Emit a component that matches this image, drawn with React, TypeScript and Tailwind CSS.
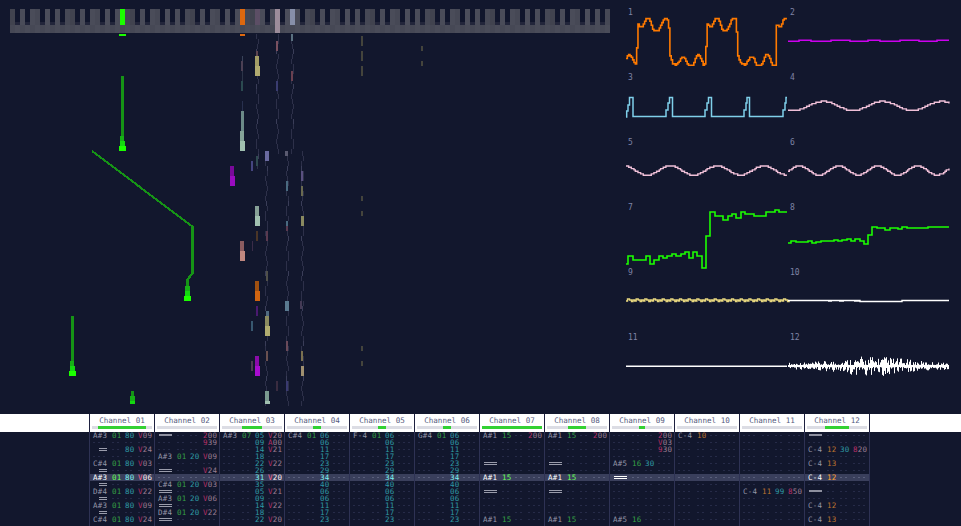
import React from 'react';

type Pt = [number, number];
type Rect = [number, number, number, number, string];

const MONO = "font-['DejaVu_Sans_Mono',monospace]";

// ---- piano ----
const BLACK = [1, 3, 6, 8, 10];
const ACTIVE_KEYS: Record<number, { color: string; full?: boolean }> = {
  22: { color: '#1cff00' },
  46: { color: '#de680f' },
  49: { color: '#5c4e65' },
  53: { color: '#9c8c9a', full: true },
  56: { color: '#878fa9' },
};
const WHITE_TOP = ['#41434f', '#4a4c59', '#4a4c59', '#464855', '#4c4e5b', '#4a4c59', '#464855'];

const Piano = () => (
  <div className="ml-[10px] flex w-[600px]">
    {Array.from({ length: 120 }).map((_, i) => {
      const pc = i % 12;
      const isBlack = BLACK.includes(pc);
      const active = ACTIVE_KEYS[i];
      const whiteIdx = [0, 2, 4, 5, 7, 9, 11].indexOf(pc);
      return (
        <div key={i} className="w-[5px]">
          {isBlack ? (
            <div className="h-4 bg-[#11162c]" style={active ? { background: active.color } : undefined}>
              {!active && <div className="h-[13px]" />}
              {!active && <div className="h-[3px] bg-[#22253a]" />}
            </div>
          ) : (
            <div className="h-4" style={{ background: active ? active.color : WHITE_TOP[whiteIdx] }} />
          )}
          <div className="h-2" style={{ background: active?.full ? active.color : i % 2 ? '#4a4c59' : '#464855' }} />
        </div>
      );
    })}
  </div>
);

// ---- falling notes ----
const NOTES: Rect[] = [
  [119, 34, 7, 2, '#1cff00'],
  [240, 34, 5, 2, '#de680f'],
  // channel 1
  [121, 76, 3, 60, '#169416'],
  [120, 136, 4, 5, '#16b016'],
  [120, 141, 5, 5, '#14d810'],
  [119, 146, 7, 5, '#1cff00'],
  // glide
  [191, 226, 3, 48, '#169416'],
  [186, 279, 3, 7, '#169416'],
  [185, 286, 5, 5, '#16b016'],
  [185, 291, 5, 5, '#14d810'],
  [184, 296, 7, 5, '#1cff00'],
  [71, 316, 3, 45, '#169416'],
  [70, 361, 4, 5, '#16b016'],
  [70, 366, 5, 5, '#14d810'],
  [69, 371, 7, 5, '#1cff00'],
  [131, 391, 3, 5, '#169416'],
  [130, 396, 5, 5, '#16b016'],
  [130, 401, 5, 3, '#14d810'],
  // upper mid
  [242, 56, 1, 5, '#39435a'],
  [241, 61, 2, 10, '#4c4054'],
  [242, 71, 1, 10, '#2b3448'],
  [241, 81, 2, 10, '#2b4a50'],
  [256, 51, 2, 5, '#5c4450'],
  [255, 56, 4, 10, '#a29c66'],
  [255, 66, 5, 10, '#b0aa70'],
  [242, 101, 1, 10, '#28304e'],
  [241, 111, 3, 20, '#6c8a88'],
  [240, 131, 4, 10, '#85a398'],
  [240, 141, 5, 10, '#a0c0b0'],
  [230, 166, 4, 10, '#7a0a9a'],
  [230, 176, 5, 10, '#9a0cc0'],
  [251, 161, 2, 10, '#454580'],
  [256, 156, 2, 10, '#2f4a50'],
  [265, 151, 4, 10, '#6a6aa0'],
  [285, 151, 3, 5, '#5a5a70'],
  [276, 41, 2, 10, '#7a5060'],
  [291, 34, 2, 7, '#5a7080'],
  [291, 71, 2, 10, '#6a4050'],
  [276, 81, 2, 10, '#3a3c70'],
  [286, 181, 2, 10, '#4a6a80'],
  [301, 171, 2, 10, '#5a5080'],
  [301, 186, 2, 10, '#6a6a50'],
  // lower mid
  [255, 206, 4, 10, '#86a096'],
  [255, 216, 5, 10, '#a0c0b0'],
  [256, 231, 2, 10, '#4a3527'],
  [240, 241, 4, 10, '#8a5c60'],
  [240, 251, 5, 10, '#c08880'],
  [252, 241, 1, 10, '#3a2c48'],
  [255, 281, 4, 10, '#a05010'],
  [255, 291, 5, 10, '#d06410'],
  [256, 306, 2, 10, '#4a1a70'],
  [251, 321, 2, 10, '#385870'],
  [266, 311, 3, 5, '#506a80'],
  [265, 316, 4, 10, '#8a8a60'],
  [265, 326, 5, 10, '#b0ac70'],
  [285, 301, 4, 10, '#5a7a90'],
  [300, 301, 2, 8, '#443a55'],
  [255, 356, 4, 10, '#8a0ca8'],
  [255, 366, 5, 10, '#a80cd0'],
  [251, 361, 2, 10, '#4a3a50'],
  [301, 366, 3, 10, '#a09070'],
  [286, 381, 2, 10, '#3a3a70'],
  [276, 381, 2, 10, '#3a2c40'],
  [265, 391, 4, 10, '#7a9a90'],
  [265, 401, 5, 3, '#a0c0b0'],
  [301, 216, 3, 10, '#8a8a60'],
  [286, 221, 2, 5, '#4a6a80'],
  [286, 226, 2, 5, '#5a3a50'],
  [266, 231, 2, 10, '#5a3a50'],
  [266, 271, 2, 10, '#50504a'],
  [301, 351, 2, 10, '#7a7050'],
  [266, 351, 2, 10, '#6a5050'],
  [286, 341, 2, 10, '#6a4a5a'],
  // far right ticks
  [361, 36, 2, 10, '#44443c'],
  [361, 51, 2, 10, '#44443c'],
  [361, 66, 2, 10, '#44443c'],
  [361, 196, 2, 5, '#44443c'],
  [361, 211, 2, 5, '#44443c'],
  [361, 346, 2, 5, '#44443c'],
  [361, 361, 2, 5, '#44443c'],
  [421, 46, 2, 5, '#44443c'],
  [421, 61, 2, 5, '#44443c'],
];

// thin wobbling trails behind the higher notes
const TRAILS: Array<[number, number, number]> = [
  [257, 34, 166],
  [277, 34, 151],
  [292, 34, 151],
  [266, 151, 404],
  [287, 151, 404],
  [302, 151, 404],
];

const Trail = ({ x, from, to }: { x: number; from: number; to: number }) => {
  const segs: Rect[] = [];
  for (let y = from, n = 0; y < to; y += 5, n++) {
    const off = Math.round(Math.sin(n * 1.7 + x) * 1.2);
    segs.push([x + off, y, 1, 5, n % 7 === 3 ? '#3a3d58' : '#2d3049']);
  }
  return (
    <>
      {segs.map(([sx, sy, w, h, c]) => (
        <rect key={sy} x={sx} y={sy} width={w} height={h} fill={c} />
      ))}
    </>
  );
};

const NoteCanvas = () => (
  <svg className="absolute inset-0" width={620} height={414} shapeRendering="crispEdges">
    {TRAILS.map(([x, a, b]) => (
      <Trail key={x} x={x} from={a} to={b} />
    ))}
    {NOTES.map(([x, y, w, h, c], i) => (
      <rect key={i} x={x} y={y} width={w} height={h} fill={c} />
    ))}
    <path d="M92 151 L193 227" stroke="#169416" strokeWidth={2} fill="none" />
    <path d="M192 274 L187 280" stroke="#169416" strokeWidth={2.4} fill="none" />
  </svg>
);

// ---- scopes ----
// samples a polyline on a small grid so that it looks like a low-res canvas
const pixelPath = (pts: Pt[], step = 1.33) => {
  let d = '';
  let seg = 0;
  for (let x = pts[0][0]; x <= pts[pts.length - 1][0]; x += step) {
    while (seg < pts.length - 2 && x > pts[seg + 1][0]) seg++;
    const [x0, y0] = pts[seg];
    const [x1, y1] = pts[seg + 1];
    const y = x1 === x0 ? y1 : y0 + ((y1 - y0) * (x - x0)) / (x1 - x0);
    const ry = (Math.round(y / step) * step).toFixed(2);
    d += d ? ` H${x.toFixed(2)} V${ry}` : `M${x.toFixed(2)} ${ry}`;
  }
  return d;
};

// step list: at x, jump to y
const stepPath = (pts: Pt[]) => pts.map(([x, y], i) => (i === 0 ? `M${x} ${y}` : `H${x} V${y}`)).join(' ');

const sine = (cy: number, amp: number, peak: number, period: number) => {
  const pts: Pt[] = [];
  for (let x = 0; x <= 161; x += 1) {
    pts.push([x, cy - amp * Math.cos(((x - peak) * 2 * Math.PI) / period)]);
  }
  return pixelPath(pts);
};

const W1: Pt[] = [
  [0, 51], [2, 46], [5, 49], [9, 57], [10, 55], [11, 31], [12, 16], [13, 19], [16, 19], [20, 10], [23, 10], [27, 22], [32, 22], [38, 10], [41, 10], [43, 22], [43, 45], [46, 55], [50, 57], [56, 49], [58, 49], [62, 57], [67, 57], [71, 46], [74, 49], [77, 57], [79, 55], [80, 35], [81, 16], [85, 19], [89, 10], [92, 10], [96, 22], [101, 22], [106, 10], [110, 10], [111, 45], [114, 55], [119, 57], [124, 49], [127, 49], [130, 57], [135, 57], [140, 46], [143, 49], [146, 57], [149, 57], [149.5, 17], [154, 19], [158, 10], [161, 10],
];

const W2: Pt[] = [
  [0, 33.3], [11, 32.3], [23, 33.3], [43, 32.3], [62, 33.3], [80, 32.3], [92, 33.3], [112, 32.3], [131, 33.3], [149, 32.3], [161, 32.3],
];

const W3: Pt[] = [
  [0, 44], [0.7, 38], [2, 32], [3.5, 24.5], [7, 24.5], [7, 43.5], [39, 43.5], [40, 37], [42, 30], [43.5, 24.5], [46.5, 24.5], [46.5, 43.5], [78, 43.5], [79, 37], [81, 30], [82.5, 24.5], [85.5, 24.5], [85.5, 43.5], [117, 43.5], [118, 37], [120, 30], [121, 24.5], [123.5, 24.5], [123.5, 43.5], [156, 43.5], [157, 37], [159, 30], [160, 24.5], [161, 24.5],
];

const W7: Pt[] = [
  [0, 61], [2, 53], [7, 57], [20, 53], [24, 61], [28, 57], [33, 53], [37, 55], [41, 53], [46, 51], [50, 53], [55, 51], [59, 49], [63, 55], [67, 49], [71, 53], [76, 65], [80, 33], [84, 9], [89, 13], [97, 17], [102, 13], [106, 11], [110, 15], [115, 9], [119, 11], [128, 13], [140, 9], [149, 7], [153, 9], [161, 9],
];
const W8: Pt[] = [
  [0, 40], [3, 38], [8, 39], [20, 38], [24, 40], [28, 39], [33, 38], [46, 37], [50, 38], [54, 37], [59, 36], [63, 38], [67, 36], [72, 38], [76, 41], [80, 32], [84, 24], [89, 25], [97, 27], [102, 25], [110, 26], [114, 24], [119, 25], [140, 24], [161, 24],
];

const saw = () => {
  const pts: Pt[] = [];
  for (let x = 0; x < 159; x += 8.67) {
    pts.push([x, 33], [x + 1.5, 31], [x + 3.5, 32], [x + 5.5, 33.5], [x + 7, 32]);
  }
  return stepPath(pts);
};

const noise = () => {
  let d = '';
  for (let i = 0; i < 161; i++) {
    const r1 = Math.abs(Math.sin(i * 12.9898) * 43758.5453) % 1;
    const r2 = Math.abs(Math.sin(i * 78.233) * 24634.6345) % 1;
    const env = 2.5 + 7 * Math.exp(-Math.pow((i - 85) / 40, 2));
    d += ` M${i + 0.5} ${(33 - 1 - r1 * r1 * env).toFixed(1)} V${(33 + 1 + r2 * r2 * env).toFixed(1)}`;
  }
  return d;
};

const SCOPES: Array<{ d: string; color: string; width?: number }> = [
  { d: pixelPath(W1), color: '#ff7a00', width: 1.6 },
  { d: stepPath(W2), color: '#cc00ee', width: 1.5 },
  { d: stepPath(W3), color: '#7fd0ea', width: 1.5 },
  { d: sine(33, 4.6, 35, 59), color: '#f0c0d8' },
  { d: sine(32.5, 4.6, 44, 46.7), color: '#f0c0d8' },
  { d: sine(32.5, 4.6, 11, 39.3), color: '#f0c0d8' },
  { d: stepPath(W7), color: '#1cff00', width: 1.6 },
  { d: stepPath(W8), color: '#1cff00', width: 1.6 },
  { d: saw(), color: '#e8d880' },
  { d: 'M0 32.5 H72 V33.5 H114 V32.5 H161 M40 33 H44 M51 33 H56 M66 33 H72', color: '#ffffff' },
  { d: 'M0 33.3 H161', color: '#ffffff' },
  { d: noise(), color: '#ffffff', width: 1 },
];

const Scopes = () => (
  <div className="grid grid-cols-[162px_162px] auto-rows-[65px] pl-[6px] pt-2">
    {SCOPES.map((s, i) => (
      <div key={i} className="relative">
        <svg className="absolute inset-0 overflow-visible" width={161} height={65}>
          <path d={s.d} stroke={s.color} strokeWidth={s.width ?? 1.4} fill="none" />
        </svg>
        <span className="absolute left-[2px] top-[1px] text-[8px] leading-[8px] text-[#7f84a6]">{i + 1}</span>
      </div>
    ))}
  </div>
);

// ---- tracker ----
const OFF = '__off';
const REL = '__rel';
type Cell = { note?: string; inst?: string; vol?: string; fx?: string };
type Column = { name: string; fill: number; fillLeft: number; shortRel?: boolean; warm?: boolean; rows: Record<number, Cell> };

const ARP: Record<number, Cell> = {
  1: { vol: '06' }, 2: { vol: '11' }, 3: { vol: '17' }, 4: { vol: '23' }, 5: { vol: '29' }, 6: { vol: '34' },
  7: { vol: '40' }, 8: { vol: '06' }, 9: { vol: '06' }, 10: { vol: '11' }, 11: { vol: '17' }, 12: { vol: '23' },
};

const COLUMNS: Column[] = [
  {
    name: 'Channel 01', fill: 48, fillLeft: 6, shortRel: true,
    rows: {
      0: { note: 'A#3', inst: '01', vol: '80', fx: 'V09' },
      2: { note: REL, vol: '80', fx: 'V24' },
      4: { note: 'C#4', inst: '01', vol: '80', fx: 'V03' },
      5: { note: REL },
      6: { note: 'A#3', inst: '01', vol: '80', fx: 'V06' },
      7: { note: REL },
      8: { note: 'D#4', inst: '01', vol: '80', fx: 'V22' },
      9: { note: REL },
      10: { note: 'A#3', inst: '01', vol: '80', fx: 'V09' },
      11: { note: REL },
      12: { note: 'C#4', inst: '01', vol: '80', fx: 'V24' },
    },
  },
  {
    name: 'Channel 02', fill: 0, fillLeft: 0,
    rows: {
      0: { note: OFF, fx: '200' },
      1: { fx: '939' },
      3: { note: 'A#3', inst: '01', vol: '20', fx: 'V09' },
      5: { note: REL, fx: 'V24' },
      7: { note: 'C#4', inst: '01', vol: '20', fx: 'V03' },
      8: { note: REL },
      9: { note: 'A#3', inst: '01', vol: '20', fx: 'V06' },
      10: { note: REL },
      11: { note: 'D#4', inst: '01', vol: '20', fx: 'V22' },
      12: { note: REL },
    },
  },
  {
    name: 'Channel 03', fill: 20, fillLeft: 20,
    rows: {
      0: { note: 'A#3', inst: '07', vol: '05', fx: 'V20' },
      1: { vol: '09', fx: 'A00' },
      2: { vol: '14', fx: 'V21' },
      3: { vol: '18' },
      4: { vol: '22', fx: 'V22' },
      5: { vol: '26' },
      6: { vol: '31', fx: 'V20' },
      7: { vol: '35' },
      8: { vol: '05', fx: 'V21' },
      9: { vol: '09' },
      10: { vol: '14', fx: 'V22' },
      11: { vol: '18' },
      12: { vol: '22', fx: 'V20' },
    },
  },
  { name: 'Channel 04', fill: 8, fillLeft: 26, rows: { ...ARP, 0: { note: 'C#4', inst: '01', vol: '06' } } },
  { name: 'Channel 05', fill: 8, fillLeft: 26, rows: { ...ARP, 0: { note: 'F-4', inst: '01', vol: '06' } } },
  { name: 'Channel 06', fill: 8, fillLeft: 26, rows: { ...ARP, 0: { note: 'G#4', inst: '01', vol: '06' } } },
  {
    name: 'Channel 07', fill: 60, fillLeft: 0,
    rows: {
      0: { note: 'A#1', inst: '15', fx: '200' },
      4: { note: REL },
      6: { note: 'A#1', inst: '15' },
      8: { note: REL },
      12: { note: 'A#1', inst: '15' },
    },
  },
  {
    name: 'Channel 08', fill: 18, fillLeft: 21,
    rows: {
      0: { note: 'A#1', inst: '15', fx: '200' },
      4: { note: REL },
      6: { note: 'A#1', inst: '15' },
      8: { note: REL },
      12: { note: 'A#1', inst: '15' },
    },
  },
  {
    name: 'Channel 09', fill: 6, fillLeft: 27,
    rows: {
      0: { fx: '200' },
      1: { fx: 'V03' },
      2: { fx: '930' },
      4: { note: 'A#5', inst: '16', vol: '30' },
      6: { note: REL },
      12: { note: 'A#5', inst: '16' },
    },
  },
  { name: 'Channel 10', fill: 0, fillLeft: 0, warm: true, rows: { 0: { note: 'C-4', inst: '10' } } },
  { name: 'Channel 11', fill: 0, fillLeft: 0, warm: true, rows: { 8: { note: 'C-4', inst: '11', vol: '99', fx: '850' } } },
  {
    name: 'Channel 12', fill: 24, fillLeft: 18, warm: true,
    rows: {
      0: { note: OFF },
      2: { note: 'C-4', inst: '12', vol: '30', fx: '820' },
      4: { note: 'C-4', inst: '13' },
      6: { note: 'C-4', inst: '12' },
      8: { note: OFF },
      10: { note: 'C-4', inst: '12' },
      12: { note: 'C-4', inst: '13' },
    },
  },
];

// empty field: faint dots, not text
const Dots = ({ n, hot }: { n: number; hot: boolean }) => (
  <div className="flex gap-[3px] pt-[3px]">
    {Array.from({ length: n }).map((_, i) => (
      <div key={i} className={`h-px w-[2px] ${hot ? 'bg-[#5a5f7c]' : 'bg-[#262b48]'}`} />
    ))}
  </div>
);

const TrackCell = ({ cell, hot, col }: { cell?: Cell; hot: boolean; col: Column }) => {
  const note = cell?.note;
  return (
    <div className="grid h-[7px] grid-cols-[19px_13px_13px_15px] pl-[3px] text-[7.5px] leading-[7px] tracking-[0.2px]">
      {note === REL ? (
        <div className={col.shortRel ? 'ml-[6px] w-2 pt-[2px]' : 'ml-[1px] w-[13px] pt-[2px]'}>
          <div className={`h-px ${hot ? 'bg-white' : 'bg-[#9a9cab]'}`} />
          <div className={`mt-px h-px ${hot ? 'bg-white' : 'bg-[#9a9cab]'}`} />
        </div>
      ) : note === OFF ? (
        <div className="ml-[1px] w-[13px] pt-[2px]">
          <div className="h-[2px] bg-[#8d8f9e]" />
        </div>
      ) : note ? (
        <span className={hot ? 'text-white' : 'text-[#9496a8]'}>{note}</span>
      ) : (
        <Dots n={3} hot={hot} />
      )}
      {cell?.inst ? (
        <span
          className={
            col.warm
              ? hot ? 'text-[#ffa030]' : 'text-[#bc742f]'
              : hot ? 'text-[#66ff55]' : 'text-[#35a045]'
          }
        >
          {cell.inst}
        </span>
      ) : (
        <Dots n={2} hot={hot} />
      )}
      {cell?.vol ? (
        <span className={hot ? 'text-[#7df2f2]' : 'text-[#2f9aa5]'}>{cell.vol}</span>
      ) : (
        <Dots n={2} hot={hot} />
      )}
      {cell?.fx ? (
        <span>
          <span className={hot ? 'text-[#ff6a9a]' : 'text-[#b83068]'}>{cell.fx[0]}</span>
          <span className={hot ? 'text-[#ffeef2]' : 'text-[#9a7e92]'}>{cell.fx.slice(1)}</span>
        </span>
      ) : (
        <Dots n={3} hot={hot} />
      )}
    </div>
  );
};

const Tracker = () => (
  <div className="relative h-[94px] overflow-hidden">
    <div className="absolute left-[89px] top-[42px] h-[7px] w-[781px] bg-[#3a3f5c]" />
    <div className="relative flex pl-[89px]">
      {COLUMNS.map((col, c) => (
        <div key={col.name} className={`w-[65px] border-l border-[#2e3254] ${c === 11 ? 'w-[66px] border-r' : ''}`}>
          {Array.from({ length: 14 }).map((_, r) => (
            <TrackCell key={r} cell={col.rows[r]} hot={r === 6} col={col} />
          ))}
        </div>
      ))}
    </div>
  </div>
);

const App = () => {
  return (
    <div className={`h-[526px] w-[961px] overflow-hidden bg-[#12172d] ${MONO}`}>
      <div className="flex h-[414px]">
        <div className="relative h-full w-[620px] pt-[9px]">
          <Piano />
          <NoteCanvas />
        </div>
        <Scopes />
      </div>

      <div className="flex h-[18px] bg-white pl-[89px]">
        {COLUMNS.map((col, c) => (
          <div
            key={col.name}
            className={`flex w-[65px] flex-col items-center border-l border-[#1e2140] ${c === 11 ? 'w-[66px] border-r' : ''}`}
          >
            <div className="pt-[2px] text-[7.6px] leading-[9px] text-[#565a7e]">{col.name}</div>
            <div className="relative mt-[1px] h-[3px] w-[60px] bg-[#dcdde4]">
              {col.fill > 0 && (
                <div className="absolute top-0 h-[3px] bg-[#33d133]" style={{ left: col.fillLeft, width: col.fill }} />
              )}
            </div>
          </div>
        ))}
      </div>

      <Tracker />
    </div>
  );
};

export default App;
